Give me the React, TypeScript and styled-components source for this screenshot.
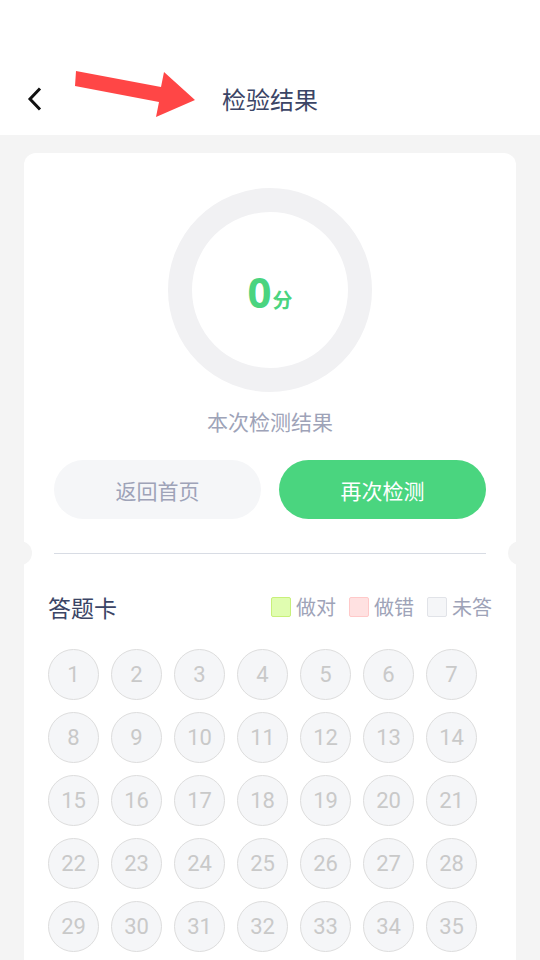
import React from 'react';
import styled, { createGlobalStyle } from 'styled-components';

const GlobalStyle = createGlobalStyle`
  html, body {
    margin: 0;
    padding: 0;
    background: #f4f4f4;
    font-family: "Noto Sans CJK SC", "Noto Sans", sans-serif;
  }
  * { box-sizing: border-box; }
`;

const Page = styled.div`
  width: 540px;
  min-height: 960px;
  background: #f4f4f4;
  overflow: hidden;
`;

const Header = styled.div`
  position: relative;
  height: 135px;
  background: #ffffff;
  display: grid;
  grid-template-columns: 1fr auto 1fr;
  align-items: center;
  padding: 62px 24px 0 24px;
`;

const BackButton = styled.div`
  width: 24px;
  height: 24px;
  display: flex;
  align-items: center;
`;

const Title = styled.div`
  font-size: 24px;
  color: #3b4566;
  line-height: 1;
`;

const Arrow = styled.svg`
  position: absolute;
  left: 0;
  top: 0;
  width: 220px;
  height: 130px;
`;

const Card = styled.div`
  margin: 18px 24px 0;
  background: #ffffff;
  border-radius: 12px 12px 0 0;
  padding-top: 35px;
  min-height: 807px;
`;

const ScoreBlock = styled.div`
  display: flex;
  flex-direction: column;
  align-items: center;
`;

const Ring = styled.div`
  width: 204px;
  height: 204px;
  border-radius: 50%;
  border: 24px solid #f1f1f3;
  display: flex;
  align-items: center;
  justify-content: center;
  padding-top: 4px;
`;

const ScoreLine = styled.div`
  display: flex;
  align-items: baseline;
  color: #4ad47f;
`;

const ScoreNum = styled.span`
  font-family: "Noto Sans", "Noto Sans CJK SC", sans-serif;
  font-weight: 700;
  font-size: 42px;
  line-height: 1;
`;

const ScoreUnit = styled.span`
  font-weight: 700;
  font-size: 20px;
  margin-left: 1px;
`;

const Caption = styled.div`
  margin-top: 15px;
  font-size: 21px;
  color: #9ea3b8;
  line-height: 28px;
`;

const Buttons = styled.div`
  display: flex;
  gap: 18px;
  padding: 0 30px;
  margin-top: 25px;
`;

const Button = styled.div<{ $primary?: boolean }>`
  flex: 1;
  height: 59px;
  border-radius: 30px;
  display: flex;
  align-items: center;
  justify-content: center;
  font-size: 21px;
  background: ${p => (p.$primary ? '#4ad57f' : '#f5f6f8')};
  color: ${p => (p.$primary ? '#ffffff' : '#9ea3b8')};
`;

const Divider = styled.div`
  position: relative;
  margin-top: 34px;
  height: 1px;
  &::before, &::after {
    content: '';
    position: absolute;
    top: -12px;
    width: 24px;
    height: 24px;
    border-radius: 50%;
    background: #f4f4f4;
  }
  &::before { left: -16px; }
  &::after { right: -16px; }
`;

const Line = styled.div`
  margin: 0 30px;
  height: 1px;
  background: #d8dce4;
`;

const SheetHead = styled.div`
  display: flex;
  align-items: center;
  justify-content: space-between;
  padding: 0 24px;
  margin-top: 38px;
`;

const SheetTitle = styled.div`
  font-size: 23px;
  color: #3b4566;
  line-height: 30px;
`;

const Legend = styled.div`
  display: flex;
  align-items: center;
  gap: 13px;
`;

const LegendItem = styled.div`
  display: flex;
  align-items: center;
  gap: 5px;
  font-size: 20px;
  color: #9ea3b8;
  line-height: 28px;
`;

const Swatch = styled.span<{ $bg: string; $border: string }>`
  width: 20px;
  height: 20px;
  border-radius: 2px;
  background: ${p => p.$bg};
  border: 1px solid ${p => p.$border};
`;

const Grid = styled.div`
  display: grid;
  grid-template-columns: repeat(7, 51px);
  gap: 12px;
  padding: 0 24px;
  margin-top: 27px;
`;

const Cell = styled.div`
  width: 51px;
  height: 51px;
  border-radius: 50%;
  background: #f5f6f8;
  border: 1px solid #dddddd;
  display: flex;
  align-items: center;
  justify-content: center;
  font-family: Roboto, "Noto Sans", sans-serif;
  font-size: 22px;
  color: #c9c9c9;
`;

const numbers = Array.from({ length: 35 }, (_, i) => i + 1);

export default function App() {
  return (
    <Page>
      <GlobalStyle />
      <Header>
        <BackButton>
          <svg width="24" height="24" viewBox="0 0 24 24">
            <path d="M16 1.5 L6 12 L16 22.5" fill="none" stroke="#111" strokeWidth="3" />
          </svg>
        </BackButton>
        <Title>检验结果</Title>
        <div />
        <Arrow viewBox="0 0 220 130">
          <polygon
            points="76,71 161,87 164,72 195,100 156,117 159,102 75,86"
            fill="#ff4646"
          />
        </Arrow>
      </Header>
      <Card>
        <ScoreBlock>
          <Ring>
            <ScoreLine>
              <ScoreNum>0</ScoreNum>
              <ScoreUnit>分</ScoreUnit>
            </ScoreLine>
          </Ring>
          <Caption>本次检测结果</Caption>
        </ScoreBlock>
        <Buttons>
          <Button>返回首页</Button>
          <Button $primary>再次检测</Button>
        </Buttons>
        <Divider>
          <Line />
        </Divider>
        <SheetHead>
          <SheetTitle>答题卡</SheetTitle>
          <Legend>
            <LegendItem>
              <Swatch $bg="#e0fdb0" $border="#c8f07a" />
              做对
            </LegendItem>
            <LegendItem>
              <Swatch $bg="#ffe1e1" $border="#ffc9c9" />
              做错
            </LegendItem>
            <LegendItem>
              <Swatch $bg="#f5f6f8" $border="#e1e3e8" />
              未答
            </LegendItem>
          </Legend>
        </SheetHead>
        <Grid>
          {numbers.map(n => (
            <Cell key={n}>{n}</Cell>
          ))}
        </Grid>
      </Card>
    </Page>
  );
}
